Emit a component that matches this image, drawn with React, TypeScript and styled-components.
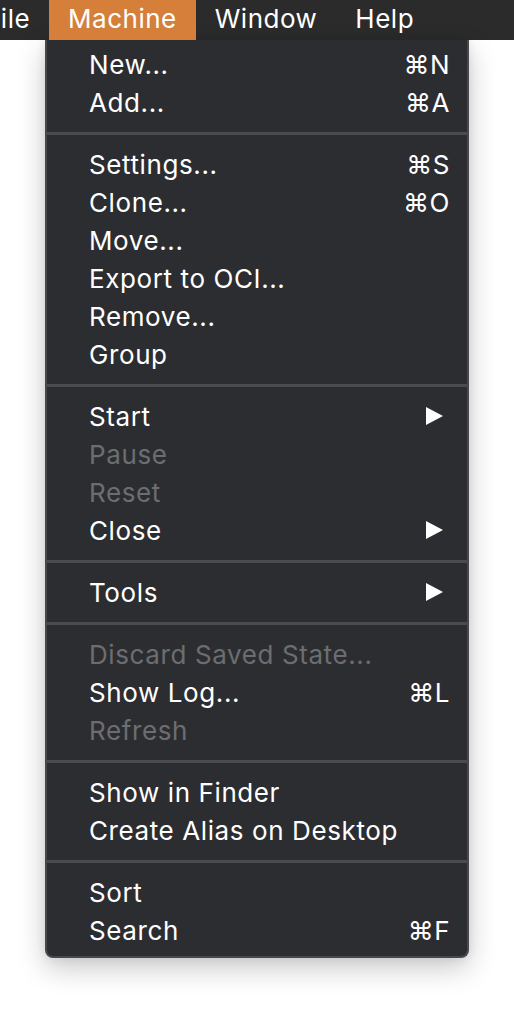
import React from "react";
import styled, { createGlobalStyle } from "styled-components";

const Global = createGlobalStyle`
  html, body { margin: 0; padding: 0; background: #ffffff; }
  body { font-family: Inter, "Noto Sans", sans-serif; -webkit-font-smoothing: antialiased; }
`;

const Page = styled.div`
  width: 514px;
  height: 1012px;
  overflow: hidden;
  background: #ffffff;
`;

const MenuBar = styled.div`
  height: 40px;
  background: #2b2b2b;
  display: flex;
  align-items: stretch;
  margin-left: -34px;
`;

const BarItem = styled.div<{ $active?: boolean }>`
  display: flex;
  align-items: center;
  padding: 0 19px 3px 19px;
  font-size: 26px;
  letter-spacing: 0.5px;
  color: #ffffff;
  background: ${(p) => (p.$active ? "#d57f3b" : "transparent")};
`;

const Menu = styled.div`
  margin-left: 45px;
  width: 420px;
  background: #2c2d31;
  border: 2px solid #47484c;
  border-top: none;
  border-radius: 0 0 8px 8px;
  padding: 5px 0 7px;
  box-shadow: 0 10px 28px rgba(0, 0, 0, 0.22), 0 0 10px rgba(0, 0, 0, 0.08);
`;

const Item = styled.div<{ $disabled?: boolean }>`
  height: 38px;
  display: flex;
  align-items: center;
  justify-content: space-between;
  padding: 0 17px 0 42px;
  font-size: 26px;
  letter-spacing: 0.6px;
  color: ${(p) => (p.$disabled ? "#6c6d71" : "#ffffff")};
`;

const Shortcut = styled.span`
  font-size: 26px;
  letter-spacing: 0.5px;
`;

const Arrow = styled.svg`
  width: 17px;
  height: 18px;
  margin-right: 7px;
`;

const Separator = styled.div`
  height: 24px;
  display: flex;
  align-items: center;
  &::after {
    content: "";
    flex: 1;
    height: 3px;
    background: #4a4b4f;
  }
`;

type Entry =
  | { sep: true }
  | { label: string; shortcut?: string; disabled?: boolean; sub?: boolean; sep?: false };

const entries: Entry[] = [
  { label: "New...", shortcut: "⌘N" },
  { label: "Add...", shortcut: "⌘A" },
  { sep: true },
  { label: "Settings...", shortcut: "⌘S" },
  { label: "Clone...", shortcut: "⌘O" },
  { label: "Move..." },
  { label: "Export to OCI..." },
  { label: "Remove..." },
  { label: "Group" },
  { sep: true },
  { label: "Start", sub: true },
  { label: "Pause", disabled: true },
  { label: "Reset", disabled: true },
  { label: "Close", sub: true },
  { sep: true },
  { label: "Tools", sub: true },
  { sep: true },
  { label: "Discard Saved State...", disabled: true },
  { label: "Show Log...", shortcut: "⌘L" },
  { label: "Refresh", disabled: true },
  { sep: true },
  { label: "Show in Finder" },
  { label: "Create Alias on Desktop" },
  { sep: true },
  { label: "Sort" },
  { label: "Search", shortcut: "⌘F" },
];

export default function App() {
  return (
    <Page>
      <Global />
      <MenuBar>
        <BarItem>File</BarItem>
        <BarItem $active>Machine</BarItem>
        <BarItem>Window</BarItem>
        <BarItem>Help</BarItem>
      </MenuBar>
      <Menu>
        {entries.map((e, i) =>
          e.sep ? (
            <Separator key={i} />
          ) : (
            <Item key={i} $disabled={e.disabled}>
              <span>{e.label}</span>
              {e.shortcut && <Shortcut>{e.shortcut}</Shortcut>}
              {e.sub && (
                <Arrow viewBox="0 0 17 18">
                  <path d="M0 0 L17 9 L0 18 Z" fill="#ffffff" />
                </Arrow>
              )}
            </Item>
          )
        )}
      </Menu>
    </Page>
  );
}
